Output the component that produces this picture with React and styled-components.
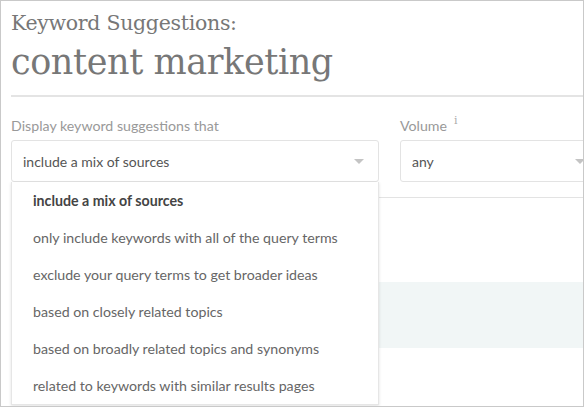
import React from 'react';
import styled, { createGlobalStyle } from 'styled-components';

const options = [
  'include a mix of sources',
  'only include keywords with all of the query terms',
  'exclude your query terms to get broader ideas',
  'based on closely related topics',
  'based on broadly related topics and synonyms',
  'related to keywords with similar results pages',
];

const App = () => {
  return (
    <>
      <GlobalStyle />
      <Frame>
        <Header>
          <Subtitle>Keyword Suggestions:</Subtitle>
          <Title>content marketing</Title>
        </Header>
        <Divider />
        <Filters>
          <Field $width="368px">
            <Label>Display keyword suggestions that</Label>
            <SelectBox>
              <span>include a mix of sources</span>
              <Caret />
            </SelectBox>
            <Menu>
              {options.map((opt, i) => (
                <MenuItem key={opt} $selected={i === 0}>{opt}</MenuItem>
              ))}
            </Menu>
          </Field>
          <Field $width="200px">
            <Label>
              Volume<Info>i</Info>
            </Label>
            <SelectBox>
              <span>any</span>
              <Caret />
            </SelectBox>
          </Field>
        </Filters>
        <Results>
          <ResultsHead />
          <ResultsRow />
        </Results>
      </Frame>
    </>
  );
};
export default App;

const GlobalStyle = createGlobalStyle`
  body {
    margin: 0;
    background: #fff;
    font-family: Lato, "Open Sans", sans-serif;
  }
`;

const Frame = styled.div`
  position: relative;
  width: 584px;
  height: 407px;
  box-sizing: border-box;
  border: 1px solid #c9c9c9;
  overflow: hidden;
  background: #fff;
`;

const Header = styled.div`
  padding: 8px 0 0 10px;
  font-family: "DejaVu Serif", "Liberation Serif", serif;
  color: #777;
`;

const Subtitle = styled.div`
  font-size: 20.5px;
  line-height: 28px;
  letter-spacing: -0.3px;
`;

const Title = styled.div`
  font-size: 35px;
  line-height: 50px;
  letter-spacing: -0.4px;
`;

const Divider = styled.div`
  margin: 8px 0 0 10px;
  border-top: 2px solid #e4e4e4;
`;

const Filters = styled.div`
  display: flex;
  gap: 21px;
  padding: 20px 0 0 10px;
`;

const Field = styled.div`
  position: relative;
  flex: 0 0 ${(p) => p.$width};
  width: ${(p) => p.$width};
`;

const Label = styled.div`
  height: 18px;
  font-size: 14.2px;
  line-height: 18px;
  color: #999;
  margin-bottom: 5px;
`;

const Info = styled.span`
  position: relative;
  top: -7px;
  margin-left: 7px;
  font-family: "DejaVu Serif", serif;
  font-size: 11px;
  line-height: 0;
  color: #aaa;
`;

const SelectBox = styled.div`
  display: flex;
  align-items: center;
  justify-content: space-between;
  height: 42px;
  box-sizing: border-box;
  padding: 0 14px 0 11px;
  border: 1px solid #e3e3e3;
  border-radius: 3px;
  font-size: 14px;
  color: #555;
`;

const Caret = styled.span`
  width: 0;
  height: 0;
  border-left: 5px solid transparent;
  border-right: 5px solid transparent;
  border-top: 5px solid #c4c4c4;
`;

const Menu = styled.div`
  position: absolute;
  top: 100%;
  left: 0;
  right: 0;
  z-index: 2;
  background: #fff;
  border: 1px solid #e6e6e6;
  border-top: none;
  box-shadow: 0 1px 3px rgba(0, 0, 0, 0.12);
`;

const MenuItem = styled.div`
  height: 37px;
  display: flex;
  align-items: center;
  padding-left: 21px;
  font-size: 14.2px;
  color: ${(p) => (p.$selected ? '#444' : '#666')};
  font-weight: ${(p) => (p.$selected ? 700 : 400)};
`;

const Results = styled.div`
  padding: 15px 0 0 10px;
`;

const ResultsHead = styled.div`
  border-top: 1px solid #e3e3e3;
`;

const ResultsRow = styled.div`
  margin-top: 84px;
  height: 66px;
  background: #f1f6f6;
`;
